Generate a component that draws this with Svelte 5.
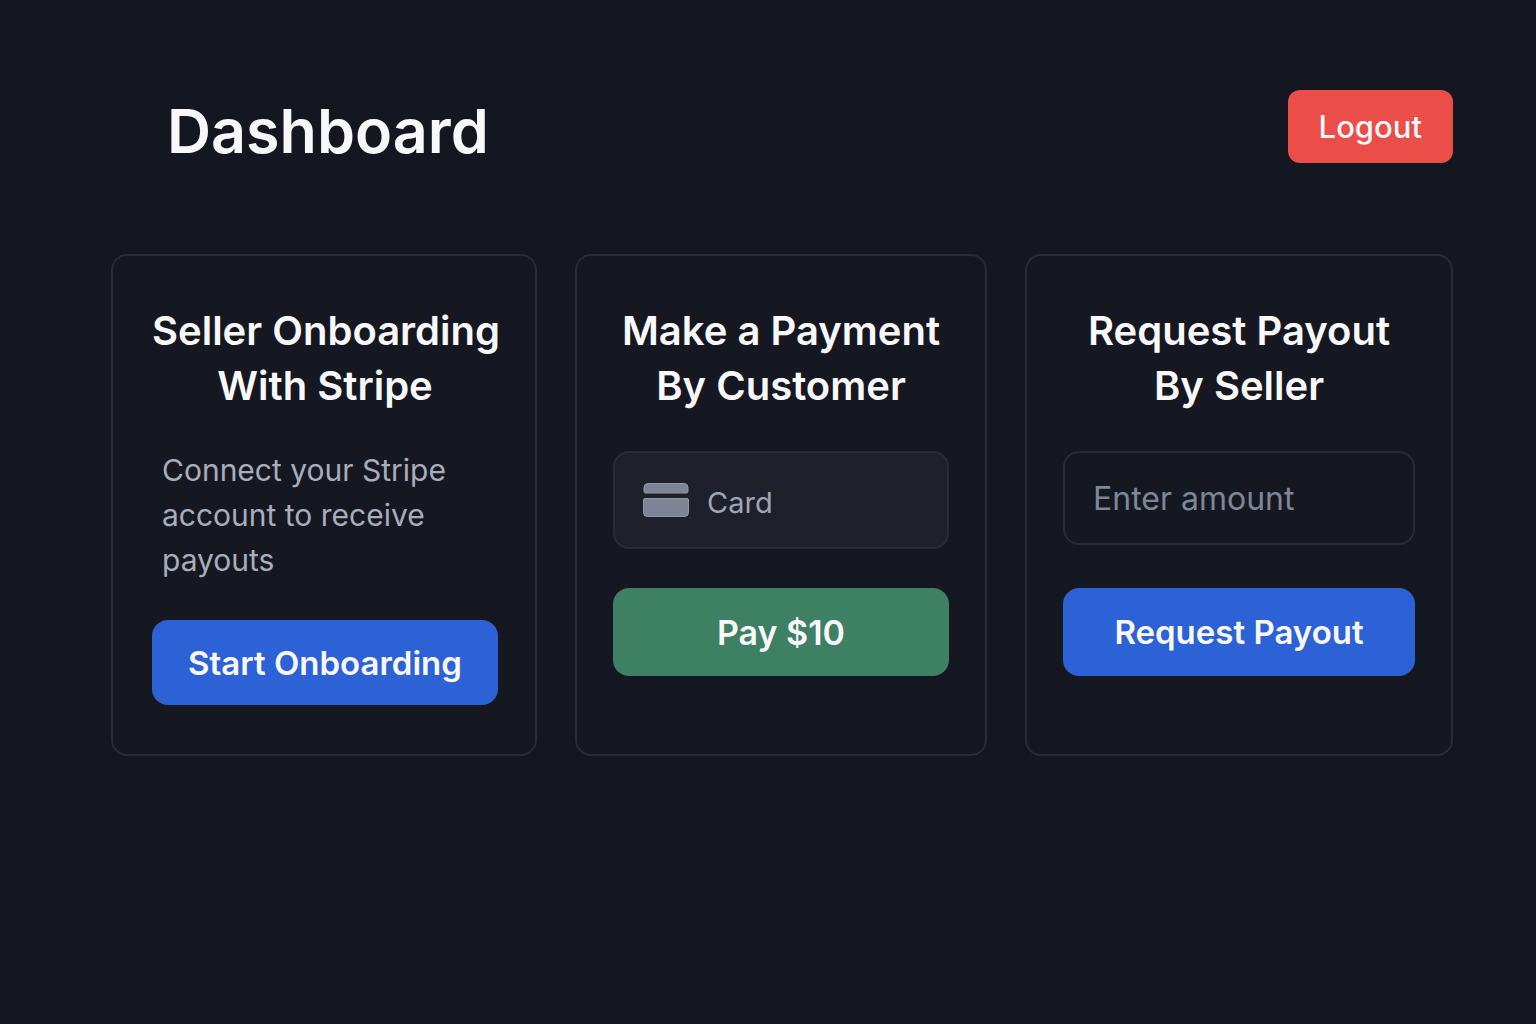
<script>
  let card = $state('');
  let amount = $state('');
</script>

<main class="page">
  <header class="topbar">
    <h1>Dashboard</h1>
    <button type="button" class="logout">Logout</button>
  </header>

  <div class="cards">
    <section class="card onboarding">
      <h2>Seller Onboarding<br />With Stripe</h2>
      <p>Connect your Stripe account to receive payouts</p>
      <button type="button" class="action short">Start Onboarding</button>
    </section>

    <section class="card">
      <h2>Make a Payment<br />By Customer</h2>
      <label class="field filled">
        <svg viewBox="0 0 46 34" width="46" height="34" aria-hidden="true">
          <path d="M5 .5h36a4 4 0 0 1 4 4v4a1.500 1.500 0 0 1-1.500 1.500h-41A1.500 1.500 0 0 1 1 8.500v-4a4 4 0 0 1 4-4Z" />
          <path d="M2 15.500h42a1.500 1.500 0 0 1 1.500 1.500v12.500a4 4 0 0 1-4 4h-37a4 4 0 0 1-4-4V17a1.500 1.500 0 0 1 1.500-1.500Z" />
        </svg>
        <input type="text" placeholder="Card" aria-label="Card" bind:value={card} />
      </label>
      <button type="button" class="action pay">Pay $10</button>
    </section>

    <section class="card">
      <h2>Request Payout<br />By Seller</h2>
      <label class="field">
        <input type="text" placeholder="Enter amount" aria-label="Enter amount" bind:value={amount} />
      </label>
      <button type="button" class="action">Request Payout</button>
    </section>
  </div>
</main>

<style>
  :global(body) {
    background: #151720;
  }

  .page {
    box-sizing: border-box;
    min-height: 100vh;
    padding: 90px 83px 90px 111px;
    font-family: Inter, 'Liberation Sans', sans-serif;
    color: #f8f8fb;
  }

  .topbar {
    display: flex;
    align-items: flex-start;
    justify-content: space-between;
    padding-left: 56px;
    margin-bottom: 82px;
  }

  h1 {
    margin: 0;
    font-size: 61px;
    line-height: 82px;
    font-weight: 600;
  }

  button {
    border: 0;
    color: inherit;
    font-family: inherit;
    cursor: pointer;
  }

  .logout {
    height: 73px;
    padding: 0 31px;
    border-radius: 12px;
    background: #eb4d48;
    font-size: 31px;
    font-weight: 500;
  }

  .cards {
    display: grid;
    grid-template-columns: 426fr 412fr 428fr;
    gap: 38px;
  }

  .card {
    display: flex;
    flex-direction: column;
    min-width: 0;
    padding: 47px 36px 49px;
    border: 2px solid #292b36;
    border-radius: 16px;
    background: #161821;
  }

  .onboarding {
    padding-inline: 39px 37px;
  }

  h2 {
    margin: 0 0 38px;
    font-size: 40px;
    line-height: 55px;
    font-weight: 600;
    text-align: center;
    white-space: nowrap;
  }

  .onboarding h2 {
    margin-bottom: 35px;
  }

  p {
    margin: 0 10px 37px;
    color: #a9adbb;
    font-size: 30px;
    line-height: 45px;
  }

  .field {
    display: flex;
    align-items: center;
    box-sizing: border-box;
    height: 94px;
    margin-bottom: 43px;
    padding: 0 28px;
    border: 2px solid #292b36;
    border-radius: 16px;
  }

  .field.filled {
    height: 98px;
    margin-bottom: 39px;
    gap: 18px;
    background: #1e202b;
  }

  .field svg {
    flex: none;
    fill: #7e8494;
    stroke: #9298a8;
  }

  input {
    flex: 1;
    min-width: 0;
    padding: 0;
    border: 0;
    outline: 0;
    background: none;
    color: inherit;
    font-family: inherit;
    font-size: 32px;
    line-height: 45px;
  }

  input::placeholder {
    color: #7f8698;
    opacity: 1;
  }

  .filled input {
    padding-top: 5px;
    font-size: 29px;
  }

  .filled input::placeholder {
    color: #a0a4b3;
  }

  .action {
    height: 88px;
    border-radius: 16px;
    background: #2d62d6;
    font-size: 33px;
    font-weight: 600;
    white-space: nowrap;
  }

  .action.short {
    height: 85px;
  }

  .action.pay {
    background: #3e8063;
    font-size: 34px;
  }

  @media (max-width: 1300px) {
    .cards {
      grid-template-columns: 1fr;
    }
  }
</style>
